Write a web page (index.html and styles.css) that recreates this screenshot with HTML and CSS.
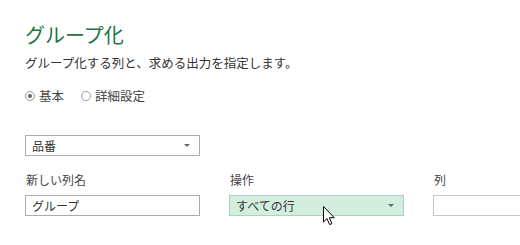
FILE: index.html
```html
<!DOCTYPE html>
<html lang="ja">
<head>
<meta charset="utf-8">
<link rel="stylesheet" href="styles.css">
</head>
<body>
<div class="dialog">
  <h1 class="title">グループ化</h1>
  <p class="desc">グループ化する列と、求める出力を指定します。</p>
  <div class="radios">
    <label class="radio"><span class="dot checked"></span>基本</label>
    <label class="radio"><span class="dot"></span>詳細設定</label>
  </div>
  <div class="select first"><span>品番</span><span class="arrow"></span></div>
  <div class="row">
    <div class="col">
      <div class="label">新しい列名</div>
      <div class="input"><span>グループ</span></div>
    </div>
    <div class="col">
      <div class="label">操作</div>
      <div class="select hover"><span>すべての行</span><span class="arrow"></span>
        <svg class="cursor" width="13" height="20" viewBox="0 0 13 20"><path d="M0.5 0.5 L0.5 16 L4 12.6 L6.6 18.6 L8.9 17.6 L6.3 11.7 L11.2 11.7 Z" fill="#fff" stroke="#000" stroke-width="1" stroke-linejoin="miter"/></svg>
      </div>
    </div>
    <div class="col last">
      <div class="label">列</div>
      <div class="input wide"></div>
    </div>
  </div>
</div>
</body>
</html>
```
FILE: styles.css
```css
html, body {
  margin: 0;
  padding: 0;
  background: #fff;
}
body {
  width: 520px;
  height: 245px;
  overflow: hidden;
  font-family: "Noto Sans CJK JP", "Noto Sans", sans-serif;
  color: #333;
}
.dialog {
  padding: 22px 0 0 25px;
}
.title {
  margin: 0;
  font-size: 20px;
  font-weight: 400;
  line-height: 26px;
  color: #217346;
}
.desc {
  margin: 5px 0 0;
  font-size: 12.5px;
  line-height: 20px;
  color: #333;
}
.radios {
  display: flex;
  gap: 17px;
  margin-top: 15px;
  font-size: 12.5px;
  line-height: 16px;
  color: #444;
}
.radio {
  display: flex;
  align-items: center;
  gap: 4px;
}
.dot {
  width: 10px;
  height: 10px;
  border: 1px solid #9a9a9a;
  border-radius: 50%;
  box-sizing: border-box;
  position: relative;
  background: #fff;
}
.dot.checked::after {
  content: "";
  position: absolute;
  left: 2px;
  top: 2px;
  width: 4px;
  height: 4px;
  border-radius: 50%;
  background: #666;
}
.select, .input {
  box-sizing: border-box;
  width: 175px;
  height: 21px;
  border: 1px solid #ababab;
  display: flex;
  align-items: center;
  justify-content: space-between;
  padding: 0 8px 0 6px;
  font-size: 12px;
  color: #333;
  background: #fff;
}
.select.first {
  margin-top: 31px;
}
.arrow {
  width: 0;
  height: 0;
  border-left: 3px solid transparent;
  border-right: 3px solid transparent;
  border-top: 3px solid #666;
  margin-right: 1px;
}
.row {
  display: flex;
  gap: 29px;
  margin-top: 15px;
}
.col {
  display: flex;
  flex-direction: column;
  gap: 7px;
}
.label {
  font-size: 12px;
  line-height: 17px;
  color: #444;
  padding-left: 1px;
}
.select.hover {
  background: #d3eedf;
  border-color: #a6d6b9;
  position: relative;
}
.input.wide {
  width: 100px;
  border-color: #c6c6c6;
}
.cursor {
  position: absolute;
  left: 93px;
  top: 10px;
}
```
